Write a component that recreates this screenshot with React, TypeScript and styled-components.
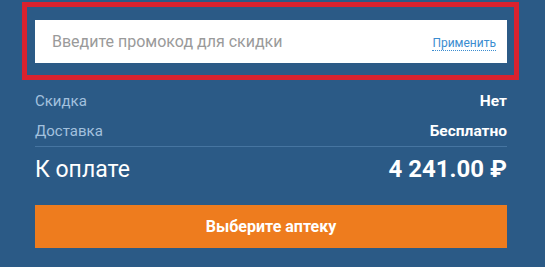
import styled, { createGlobalStyle } from "styled-components";

const GlobalStyle = createGlobalStyle`
  html, body {
    margin: 0;
    padding: 0;
    background: #2b5a86;
  }
  body {
    font-family: Roboto, "Liberation Sans", Arial, sans-serif;
  }
`;

const Page = styled.div`
  width: 545px;
  height: 267px;
  box-sizing: border-box;
  padding: 2px 38px 0 35px;
  background: #2b5a86;
  overflow: hidden;
`;

const Highlight = styled.div`
  margin: 0 -12px 0 -13px;
  border: 5px solid #d9222e;
  padding: 13px 7px 12px 8px;
`;

const PromoField = styled.div`
  display: flex;
  align-items: center;
  height: 43px;
  background: #fff;
  padding: 0 11px 0 17px;
`;

const PromoInput = styled.input`
  flex: 1;
  min-width: 0;
  border: none;
  outline: none;
  background: transparent;
  font-family: inherit;
  font-size: 16px;
  color: #333;
  padding: 0;

  &::placeholder {
    color: #9a9a9a;
  }
`;

const ApplyLink = styled.a`
  font-size: 12px;
  color: #3b8dd0;
  text-decoration: none;
  border-bottom: 1px dotted #3b8dd0;
  padding-top: 4px;
  line-height: 14px;
`;

const Summary = styled.div`
  margin-top: 6px;
  border-bottom: 1px solid #4675a1;
`;

const Row = styled.div`
  display: flex;
  justify-content: space-between;
  align-items: baseline;
  line-height: 30px;
`;

const Label = styled.span<{ $big?: boolean }>`
  font-size: ${(p) => (p.$big ? "23px" : "15px")};
  color: ${(p) => (p.$big ? "#fff" : "#a3c1de")};
`;

const Value = styled.span<{ $big?: boolean }>`
  font-size: ${(p) => (p.$big ? "24px" : "15.5px")};
  font-weight: 700;
  color: #fff;
`;

const TotalRow = styled(Row)`
  margin-top: 7px;
`;

const SubmitButton = styled.button`
  display: block;
  width: 100%;
  height: 43px;
  margin-top: 20px;
  border: none;
  background: #ee7c1e;
  color: #fff;
  font-family: inherit;
  font-size: 16px;
  font-weight: 700;
  cursor: pointer;
`;

export default function App() {
  return (
    <>
      <GlobalStyle />
      <Page>
        <Highlight>
          <PromoField>
            <PromoInput placeholder="Введите промокод для скидки" />
            <ApplyLink href="#">Применить</ApplyLink>
          </PromoField>
        </Highlight>
        <Summary>
          <Row>
            <Label>Скидка</Label>
            <Value>Нет</Value>
          </Row>
          <Row>
            <Label>Доставка</Label>
            <Value>Бесплатно</Value>
          </Row>
        </Summary>
        <TotalRow>
          <Label $big>К оплате</Label>
          <Value $big>4 241.00 ₽</Value>
        </TotalRow>
        <SubmitButton>Выберите аптеку</SubmitButton>
      </Page>
    </>
  );
}
